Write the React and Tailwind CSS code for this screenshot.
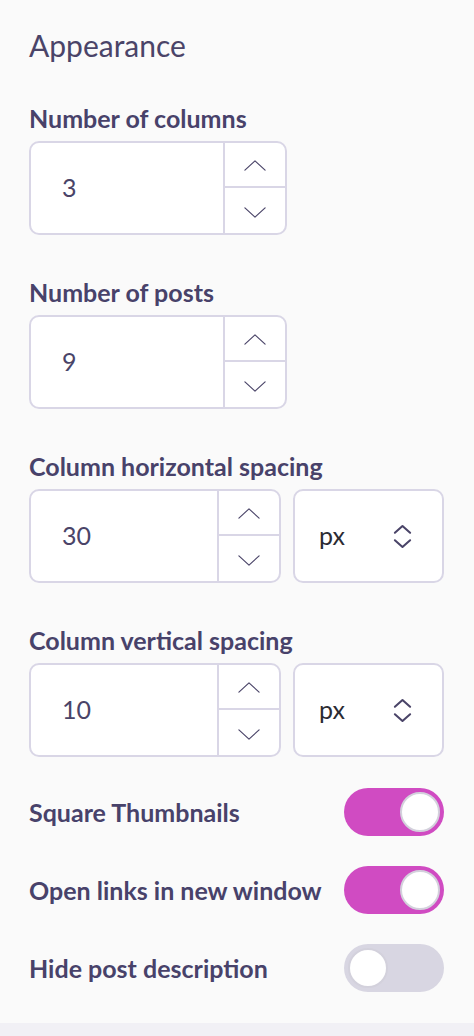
import React, { useState } from 'react';

const Chevron = ({ dir = 'up', className = '' }) => (
    <svg viewBox="0 0 24 12" className={className} fill="none" stroke="currentColor" strokeWidth="1.3" strokeLinecap="round" strokeLinejoin="round">
        {dir === 'up' ? <path d="M1 11 L12 1 L23 11" /> : <path d="M1 1 L12 11 L23 1" />}
    </svg>
);

const NumberInput = ({ value, width }) => (
    <div className={`flex h-[94px] ${width} rounded-[10px] border-2 border-[#d9d6e6] bg-white overflow-hidden`}>
        <div className="flex-1 flex items-center pl-[31px] text-[25px] text-[#4a4468]">{value}</div>
        <div className="w-[62px] flex flex-col border-l-2 border-[#d9d6e6]">
            <button className="flex-1 flex items-center justify-center text-[#4a4468] pt-[2px]">
                <Chevron dir="up" className="w-[22px] h-[11px]" />
            </button>
            <button className="flex-1 flex items-center justify-center text-[#4a4468] border-t-2 border-[#d9d6e6] pt-[4px]">
                <Chevron dir="down" className="w-[22px] h-[11px]" />
            </button>
        </div>
    </div>
);

const UnitSelect = () => (
    <div className="flex items-center justify-between h-[94px] w-[151px] rounded-[10px] border-2 border-[#d9d6e6] bg-white pl-[24px] pr-[30px]">
        <span className="text-[25px] text-[#2b2b33]">px</span>
        <svg viewBox="0 0 20 26" className="w-[19px] h-[25px] text-[#4a4468]" fill="none" stroke="currentColor" strokeWidth="2.2" strokeLinecap="round" strokeLinejoin="round">
            <path d="M2 9 L10 2 L18 9" />
            <path d="M2 17 L10 24 L18 17" />
        </svg>
    </div>
);

const Toggle = ({ on, onClick }) => (
    <button
        onClick={onClick}
        className={`flex items-center w-[100px] h-12 rounded-full px-[4px] ${on ? 'bg-[#d04bc2] justify-end' : 'bg-[#d8d6e2] justify-start'}`}
    >
        <span className="w-[40px] h-[40px] rounded-full bg-white border-2 border-[#d3d1dc]" />
    </button>
);

const Section = ({ label, children }) => (
    <div className="flex flex-col">
        <div className="text-[25px] leading-[28px] font-bold text-[#48426a] mb-[9px]">{label}</div>
        {children}
    </div>
);

const App = () => {
    const [toggles, setToggles] = useState({ square: true, newWindow: true, hideDesc: false });
    const flip = (k) => setToggles((t) => ({ ...t, [k]: !t[k] }));

    const rows = [
        { key: 'square', label: 'Square Thumbnails' },
        { key: 'newWindow', label: 'Open links in new window' },
        { key: 'hideDesc', label: 'Hide post description' },
    ];

    return (
        <div className="min-h-[1036px] w-[474px] bg-[#fafafa] flex flex-col" style={{ fontFamily: 'Lato, "Open Sans", sans-serif' }}>
            <div className="px-[29px] pt-[29px] pb-[31px] flex flex-col">
                <h2 className="text-[30px] leading-[32px] text-[#4a4468] font-normal">Appearance</h2>
                <div className="flex flex-col gap-[43px] mt-[43px]">
                    <Section label="Number of columns">
                        <NumberInput value="3" width="w-[258px]" />
                    </Section>
                    <Section label="Number of posts">
                        <NumberInput value="9" width="w-[258px]" />
                    </Section>
                    <Section label="Column horizontal spacing">
                        <div className="flex gap-[12px]">
                            <NumberInput value="30" width="w-[252px]" />
                            <UnitSelect />
                        </div>
                    </Section>
                    <Section label="Column vertical spacing">
                        <div className="flex gap-[12px]">
                            <NumberInput value="10" width="w-[252px]" />
                            <UnitSelect />
                        </div>
                    </Section>
                </div>
                <div className="flex flex-col gap-[30px] mt-[31px] w-[415px]">
                    {rows.map((r) => (
                        <div key={r.key} className="flex items-center justify-between">
                            <span className="text-[25px] leading-[28px] font-bold text-[#48426a]">{r.label}</span>
                            <Toggle on={toggles[r.key]} onClick={() => flip(r.key)} />
                        </div>
                    ))}
                </div>
            </div>
            <div className="flex-1 bg-[#f1f0f5]" />
        </div>
    );
};

export default App;
